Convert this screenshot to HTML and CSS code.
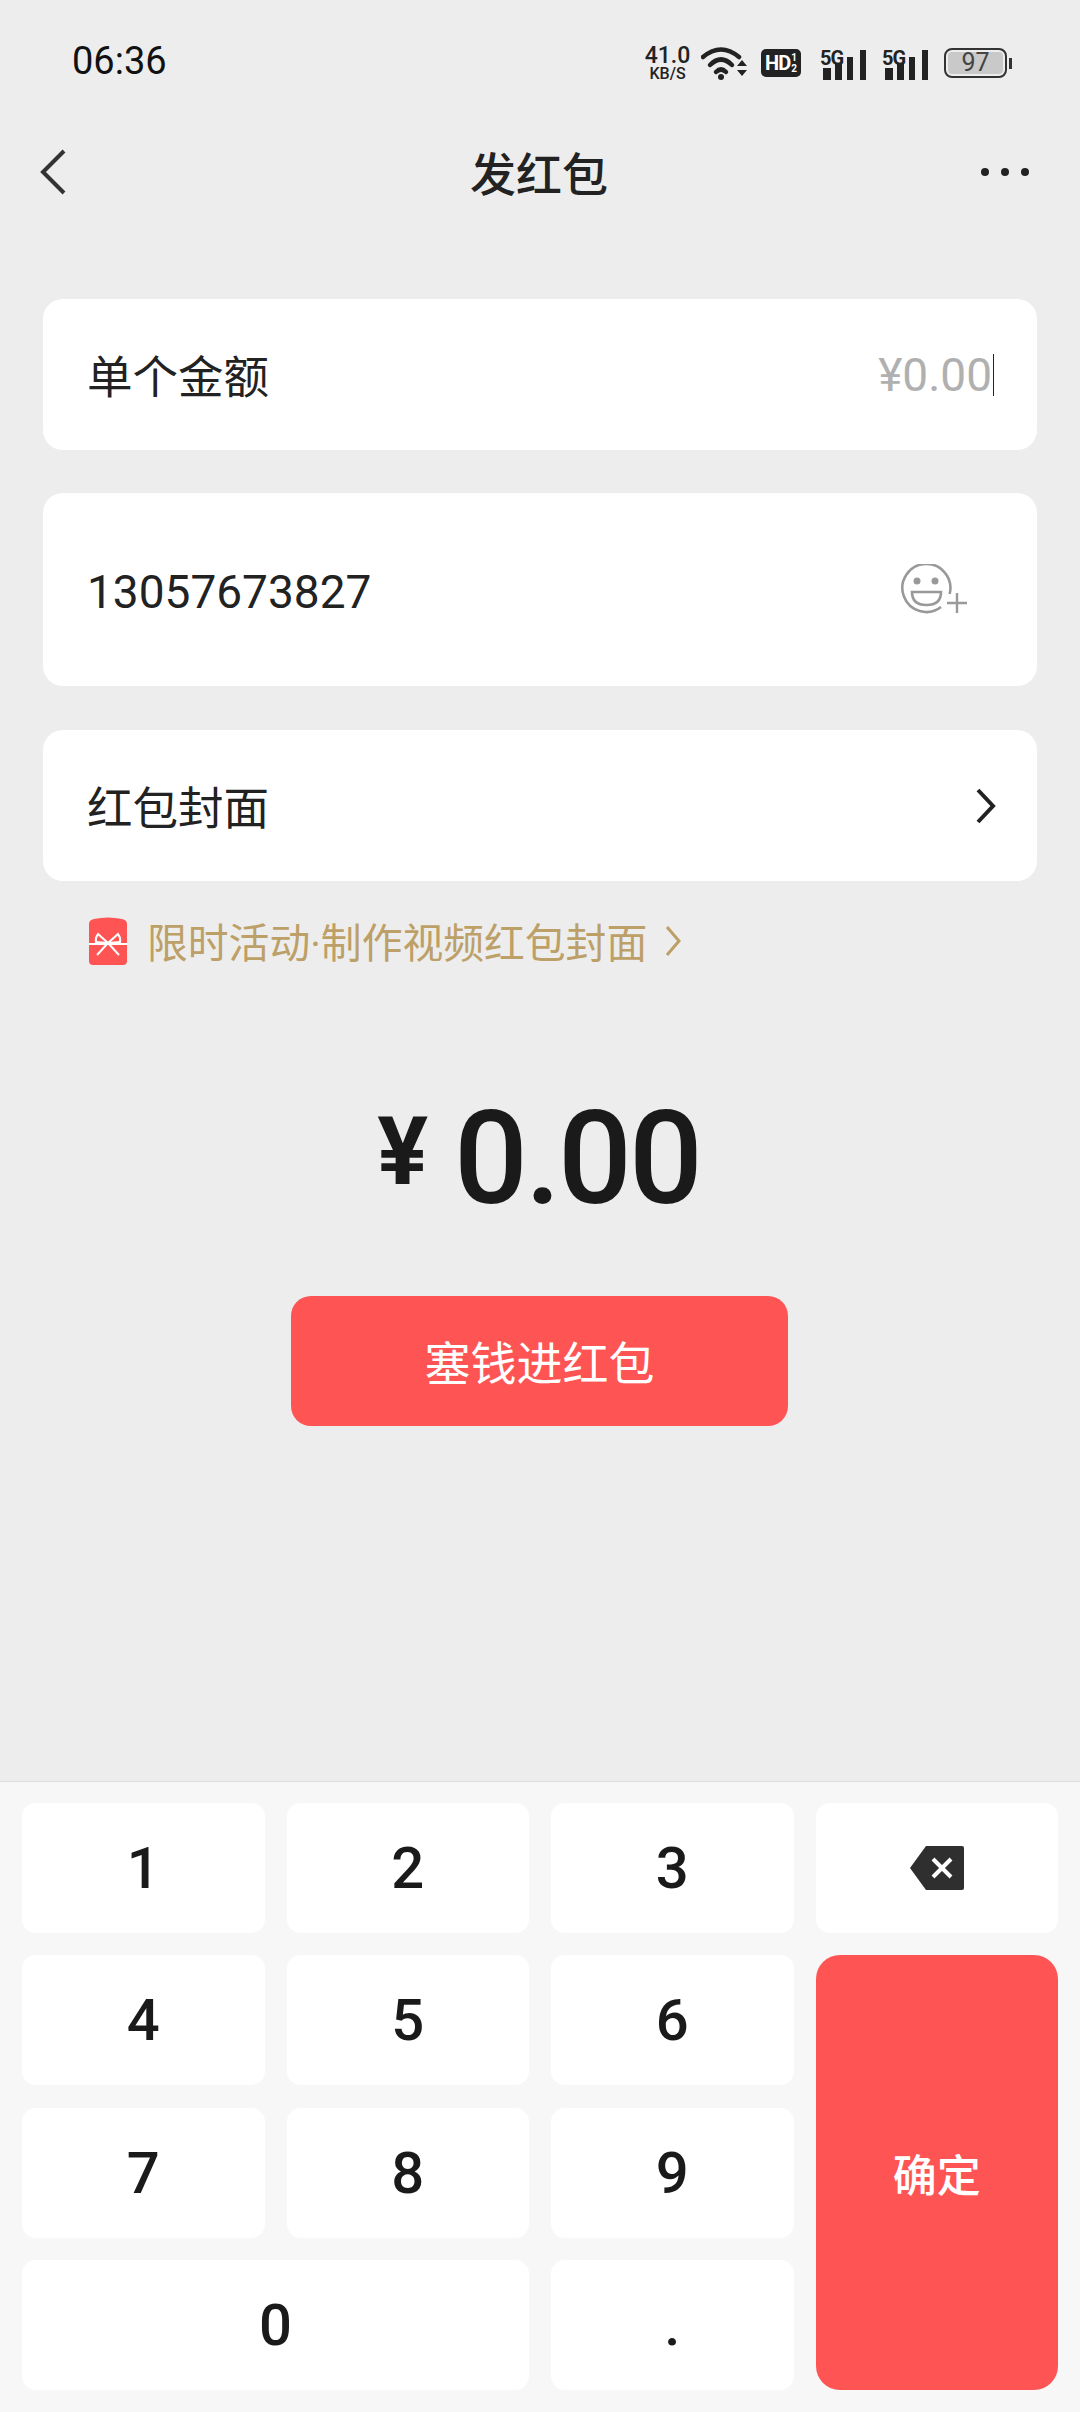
FILE: index.html
```html
<!DOCTYPE html>
<html>
  <head>
    <meta charset="utf-8" />
    <title>发红包</title>
    <link rel="stylesheet" href="styles.css">
  </head>

  <body>
    <div class="page">
      <div class="status-bar">
        <span class="status-time">06:36</span>
        <div class="status-icons">
          <div class="net-speed">
            <span class="net-speed-num">41.0</span>
            <span class="net-speed-unit">KB/S</span>
          </div>
          <svg class="wifi" width="46" height="36" viewBox="0 0 46 36">
            <path d="M2 12 Q20 -3 38 12" fill="none" stroke="#222" stroke-width="4.5" stroke-linecap="round"/>
            <path d="M9 20 Q20 9 31 20" fill="none" stroke="#222" stroke-width="4.5" stroke-linecap="round"/>
            <path d="M15 27 Q20 22 25 27" fill="none" stroke="#222" stroke-width="4.5" stroke-linecap="round"/>
            <circle cx="20" cy="32" r="3" fill="#222"/>
            <path d="M36 21 L41 15 L46 21 Z M36 25 L46 25 L41 31 Z" fill="#222"/>
          </svg>
          <div class="hd-badge">
            <span class="hd-text">HD</span>
            <span class="hd-sims"><span>1</span><span>2</span></span>
          </div>
          <svg class="signal" width="47" height="36" viewBox="0 -5 47 36">
            <text x="0" y="15" class="signal-text">5G</text>
            <rect x="3" y="18" width="8" height="12" fill="#222"/>
            <rect x="15" y="13" width="7" height="17" fill="#222"/>
            <rect x="27" y="7" width="6" height="23" fill="#222"/>
            <rect x="40" y="0" width="6" height="30" fill="#222"/>
          </svg>
          <svg class="signal" width="47" height="36" viewBox="0 -5 47 36">
            <text x="0" y="15" class="signal-text">5G</text>
            <rect x="3" y="18" width="8" height="12" fill="#222"/>
            <rect x="15" y="13" width="7" height="17" fill="#222"/>
            <rect x="27" y="7" width="6" height="23" fill="#222"/>
            <rect x="40" y="0" width="6" height="30" fill="#222"/>
          </svg>
          <div class="battery">
            <div class="battery-body">97</div>
            <div class="battery-nub"></div>
          </div>
        </div>
      </div>

      <div class="nav-bar">
        <svg class="nav-back" width="26" height="46" viewBox="0 0 26 46">
          <path d="M24 2 L3 23 L24 44" fill="none" stroke="#333" stroke-width="4"/>
        </svg>
        <h1 class="nav-title">发红包</h1>
        <div class="nav-more"><i></i><i></i><i></i></div>
      </div>

      <div class="content">
        <div class="card card-short">
          <span class="card-label">单个金额</span>
          <div class="amount-input">
            <span class="amount-placeholder">¥0.00</span>
            <span class="caret"></span>
          </div>
        </div>

        <div class="card card-tall">
          <span class="card-number">13057673827</span>
          <svg width="68" height="52" viewBox="0 0 68 52">
            <path d="M49.6 30 A24 24 0 1 0 41 43" fill="none" stroke="#999" stroke-width="2.6"/>
            <circle cx="17" cy="17" r="3.5" fill="#999"/>
            <circle cx="35" cy="17" r="3.5" fill="#999"/>
            <path d="M12 28 H41 Q41 41 26.500 41 Q12 41 12 28 Z" fill="none" stroke="#999" stroke-width="2.6"/>
            <path d="M47 39 H67 M57 29 V49" fill="none" stroke="#999" stroke-width="2.4"/>
          </svg>
        </div>

        <div class="card card-short">
          <span class="card-label">红包封面</span>
          <svg width="20" height="36" viewBox="0 0 20 36">
            <path d="M2 2 L17 18 L2 34" fill="none" stroke="#222" stroke-width="4"/>
          </svg>
        </div>

        <div class="promo">
          <svg class="promo-icon" width="38" height="48" viewBox="0 0 38 48">
            <path d="M0 7 Q0 3 5 2 Q19 -1 33 2 Q38 3 38 7 V44 Q38 48 34 48 H4 Q0 48 0 44 Z" fill="#ff5454"/>
            <path d="M0 27 H38" stroke="#fff" stroke-width="2"/>
            <path d="M19 26 L9 17 Q6 21 7 25 Z M19 26 L29 17 Q32 21 31 25 Z M19 26 L8 38 M19 26 L30 38" fill="none" stroke="#fff" stroke-width="2"/>
          </svg>
          <span class="promo-text">限时活动·制作视频红包封面</span>
          <svg width="16" height="30" viewBox="0 0 16 30">
            <path d="M2 1 L14 15 L2 29" fill="none" stroke="#bd9f68" stroke-width="3"/>
          </svg>
        </div>

        <div class="total">
          <span class="total-yen">¥</span>
          <span class="total-num">0.00</span>
        </div>

        <button class="submit" type="button">塞钱进红包</button>
      </div>

      <div class="keypad">
        <button class="key" type="button">1</button>
        <button class="key" type="button">2</button>
        <button class="key" type="button">3</button>
        <button class="key" type="button">
          <svg width="54" height="44" viewBox="0 0 54 44">
            <path d="M16 0 H52 Q54 0 54 2 V42 Q54 44 52 44 H16 L0 22 Z" fill="#2f2f2f"/>
            <path d="M23 13 L41 31 M41 13 L23 31" fill="none" stroke="#fff" stroke-width="4"/>
          </svg>
        </button>
        <button class="key" type="button">4</button>
        <button class="key" type="button">5</button>
        <button class="key" type="button">6</button>
        <button class="key key-confirm" type="button">确定</button>
        <button class="key" type="button">7</button>
        <button class="key" type="button">8</button>
        <button class="key" type="button">9</button>
        <button class="key key-zero" type="button">0</button>
        <button class="key" type="button">.</button>
      </div>
    </div>
  </body>
</html>
```

FILE: styles.css
```css
* {
  box-sizing: border-box;
}

body {
  margin: 0;
  background-color: #ededed;
  color: #1a1a1a;
  font-family: 'Roboto', 'Noto Sans CJK SC', sans-serif;
}

.page {
  display: flex;
  flex-direction: column;
  width: 1080px;
  height: 2412px;
  overflow: hidden;
}

/* status bar */
.status-bar {
  display: flex;
  justify-content: space-between;
  align-items: center;
  height: 122px;
  padding: 0 68px 0 72px;
}

.status-time {
  font-size: 38px;
  color: #111;
}

.status-icons {
  display: flex;
  align-items: center;
  margin-top: 4px;
}

.net-speed {
  display: flex;
  flex-direction: column;
  align-items: center;
  width: 48px;
  margin-right: 9.5px;
  color: #222;
  font-weight: 500;
}

.net-speed-num {
  font-size: 23px;
  line-height: 21px;
}

.net-speed-unit {
  font-size: 16px;
  line-height: 15px;
}

.wifi {
  margin-right: 14px;
}

.hd-badge {
  display: flex;
  align-items: center;
  justify-content: center;
  gap: 1px;
  width: 40px;
  height: 28px;
  margin-right: 19px;
  background: #222;
  border-radius: 5px;
  color: #fff;
  font-weight: 700;
}

.hd-text {
  font-size: 20px;
  letter-spacing: -1px;
}

.hd-sims {
  display: flex;
  flex-direction: column;
  font-size: 10px;
  line-height: 11px;
}

.signal {
  margin-right: 15px;
}

.signal-text {
  font-family: 'Roboto', sans-serif;
  font-size: 20px;
  font-weight: 700;
  fill: #222;
  letter-spacing: -1px;
}

.battery {
  display: flex;
  align-items: center;
  gap: 2px;
}

.battery-body {
  width: 63px;
  height: 30px;
  border: 2.5px solid #333;
  border-radius: 8px;
  background: #c9c9c9;
  box-shadow: inset 0 0 0 2px #ededed;
  color: #444;
  font-size: 25px;
  line-height: 25px;
  text-align: center;
}

.battery-nub {
  width: 3px;
  height: 11px;
  background: #333;
}

/* nav */
.nav-bar {
  display: grid;
  grid-template-columns: 1fr auto 1fr;
  align-items: center;
  height: 104px;
  padding: 0 51px 4px;
}

.nav-back {
  margin-left: -11px;
}

.nav-title {
  margin: 0 2px 2px 0;
  font-size: 46px;
  font-weight: 500;
  color: #222;
}

.nav-more {
  display: flex;
  justify-content: flex-end;
  gap: 12px;
}

.nav-more i {
  display: block;
  width: 8px;
  height: 8px;
  border-radius: 50%;
  background: #222;
}

/* form */
.content {
  display: flex;
  flex-direction: column;
  align-items: center;
  padding: 73px 43px 0;
}

.card {
  display: flex;
  justify-content: space-between;
  align-items: center;
  width: 100%;
  margin-bottom: 43px;
  padding: 0 41px 0 44px;
  background: #fff;
  border-radius: 20px;
}

.card-short {
  height: 151px;
}

.card-tall {
  height: 193px;
  margin-bottom: 44px;
  padding-right: 69px;
}

.card-label {
  margin-bottom: 2px;
  font-size: 45.5px;
  color: #222;
}

.card-number {
  margin-top: 5px;
  font-size: 46px;
  color: #222;
}

.amount-input {
  display: flex;
  align-items: center;
  gap: 1px;
  margin-right: 2px;
}

.amount-placeholder {
  font-size: 46px;
  color: #b0b0b0;
}

.caret {
  width: 1px;
  height: 42px;
  background: #222;
}

.card:nth-child(3) {
  margin-bottom: 0;
}

.promo {
  display: flex;
  align-items: center;
  align-self: flex-start;
  height: 120px;
  padding-left: 46px;
}

.promo-text {
  margin: 0 18px 2px 20px;
  font-size: 40.8px;
  color: #bd9f68;
}

.total {
  display: flex;
  align-items: flex-start;
  margin-top: 98px;
  margin-right: 3px;
  color: #1a1a1a;
}

.total-yen {
  margin-top: 5px;
  margin-right: 26px;
  font-size: 95px;
  font-weight: 700;
  line-height: 95px;
}

.total-num {
  font-size: 130px;
  font-weight: 500;
  line-height: 120px;
  letter-spacing: -3px;
}

.submit {
  width: 497px;
  height: 130px;
  margin-top: 77px;
  margin-right: 1px;
  padding: 0 0 2px;
  border: none;
  border-radius: 20px;
  background: #ff5454;
  color: #fff;
  font-family: inherit;
  font-size: 46px;
}

/* keypad */
.keypad {
  display: grid;
  grid-template-columns: repeat(4, 1fr);
  grid-auto-rows: 130px;
  gap: 22.33px 22px;
  margin-top: auto;
  padding: 21px 22px 22px;
  background: #f7f7f7;
  border-top: 1px solid #dcdcdc;
}

.key {
  display: flex;
  justify-content: center;
  align-items: center;
  padding: 0;
  border: none;
  border-radius: 14px;
  background: #fff;
  color: #1a1a1a;
  font-family: inherit;
  font-size: 58px;
  font-weight: 500;
}

.key-confirm {
  grid-column: 4;
  grid-row: 2 / span 3;
  border-radius: 24px;
  background: #ff5454;
  color: #fff;
  font-size: 44px;
}

.key-zero {
  grid-column: span 2;
}
```
